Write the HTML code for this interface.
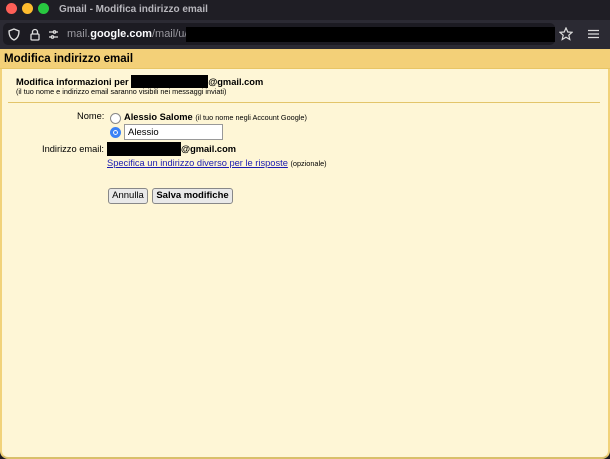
<!DOCTYPE html>
<html><head><meta charset="utf-8"><style>
*{margin:0;padding:0;box-sizing:border-box}
body{width:610px;height:459px;overflow:hidden;background:#1c1b22;font-family:"Liberation Sans",Arial,sans-serif;position:relative}
.abs{position:absolute;white-space:nowrap}
.title{top:0;left:0;width:610px;height:20px;background:#1f1e25}
.dot{width:11px;height:11px;border-radius:50%;top:3px}
.tb{top:20px;left:0;width:610px;height:29px;background:#2b2a33}
.field{top:23px;left:3px;width:552px;height:22px;background:#1c1b22;border-radius:5px}
.page{top:49px;left:0;width:610px;height:410px;background:#fef6d6;border-left:2px solid #f1d27a;border-right:2px solid #f1d27a;border-bottom:2px solid #d9bf6a;border-radius:0 0 8px 8px}
.hdr{top:49px;left:0;width:610px;height:20px;background:#f3d078;border-bottom:1px solid #e8c565}
.lbl{font-size:9.3px;color:#000}
.radio{width:11px;height:11px;border-radius:50%;border:1px solid #888;background:#fff}
.btn{height:16px;border:1px solid #888;border-radius:3px;background:#e9e9e9;font-size:9.5px;line-height:14px;text-align:center}
</style></head><body>
<div class="abs title"></div>
<div class="abs dot" style="left:6px;background:#fe5f57"></div>
<div class="abs dot" style="left:22px;background:#febc2e"></div>
<div class="abs dot" style="left:38px;background:#28c840"></div>
<div class="abs" style="left:59px;top:4px;font-size:10px;font-weight:bold;color:#b8b7bd">Gmail - Modifica indirizzo email</div>
<div class="abs tb"></div>
<div class="abs field"></div>
<svg class="abs" style="left:8px;top:28px" width="60" height="13" viewBox="0 0 60 13" fill="none" stroke="#ddd" stroke-width="1.3">
<path d="M6 1 L11 3 Q11 10 6 12 Q1 10 1 3 Z"/>
<rect x="23" y="6" width="8" height="6" rx="1"/><path d="M24.5 6 V4 a2.5 2.5 0 0 1 5 0 V6"/>
<path d="M41 4 H45 M48 4 H50 M41 9 H43 M46 9 H50"/><circle cx="46.5" cy="4" r="1.2"/><circle cx="44.5" cy="9" r="1.2"/>
</svg>
<div class="abs" style="left:67px;top:28px;font-size:11px;color:#9a99a0">mail.<span style="color:#fbfbfe;font-weight:bold">google.com</span>/mail/u/0/</div>
<div class="abs" style="left:186px;top:27px;width:369px;height:15px;background:#000"></div>
<svg class="abs" style="left:559px;top:27px" width="14" height="14" viewBox="0 0 14 14" fill="none" stroke="#ddd" stroke-width="1.2"><path d="M7 1 L8.8 5 L13 5.3 L9.8 8.2 L10.8 12.5 L7 10.2 L3.2 12.5 L4.2 8.2 L1 5.3 L5.2 5 Z"/></svg>
<svg class="abs" style="left:588px;top:29px" width="11" height="10" stroke="#ddd" stroke-width="1.3"><path d="M0 1.5H11M0 5H11M0 8.5H11"/></svg>
<div class="abs page"></div>
<div class="abs hdr"></div>
<div class="abs" style="left:4px;top:53px;font-size:11.5px;font-weight:bold">Modifica indirizzo email</div>
<div class="abs lbl" style="left:16px;top:75px;font-weight:bold">Modifica informazioni per <span style="display:inline-block;width:77px;height:13px;background:#000;vertical-align:-3px"></span>@gmail.com</div>
<div class="abs" style="left:16px;top:87px;font-size:7.3px">(il tuo nome e indirizzo email saranno visibili nei messaggi inviati)</div>
<div class="abs" style="left:8px;top:102px;width:592px;height:1px;background:#e3c56a"></div>
<div class="abs lbl" style="left:77px;top:111px">Nome:</div>
<div class="abs radio" style="left:110px;top:113px"></div>
<div class="abs lbl" style="left:124px;top:112px"><b>Alessio Salome</b> <span style="font-size:7.3px">(il tuo nome negli Account Google)</span></div>
<div class="abs radio" style="left:110px;top:127px;border:3px solid #3b82f6;box-shadow:inset 0 0 0 1px #fff;background:#3b82f6"></div>
<div class="abs" style="left:124px;top:124px;width:99px;height:16px;background:#fff;border:1px solid #999;font-size:9.5px;padding:2px 3px">Alessio</div>
<div class="abs lbl" style="left:42px;top:144px">Indirizzo email:</div>
<div class="abs" style="left:107px;top:142px;width:74px;height:14px;background:#000"></div>
<div class="abs lbl" style="left:181px;top:144px;font-weight:bold">@gmail.com</div>
<div class="abs lbl" style="left:107px;top:158px"><span style="color:#1a1ab0;text-decoration:underline">Specifica un indirizzo diverso per le risposte</span> <span style="font-size:7.3px">(opzionale)</span></div>
<div class="abs btn" style="left:108px;top:188px;width:40px">Annulla</div>
<div class="abs btn" style="left:152px;top:188px;width:81px;font-weight:bold">Salva modifiche</div>
</body></html>
